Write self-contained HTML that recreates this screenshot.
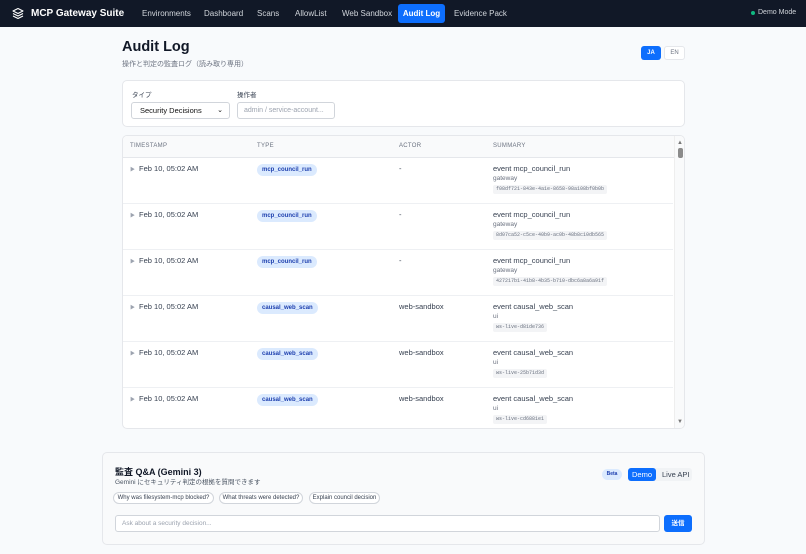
<!DOCTYPE html>
<html><head><meta charset="utf-8"><style>
*{box-sizing:border-box;margin:0;padding:0}
body{width:806px;height:554px;overflow:hidden;background:#f8fafc;font-family:"Liberation Sans","Noto Sans CJK JP",sans-serif;color:#1f2937;position:relative}
.a{position:absolute;white-space:nowrap}
.nav{position:absolute;left:0;top:0;width:806px;height:27px;background:#111827}
.ni{position:absolute;top:9px;font-size:8px;color:#d1d5db}
.card{position:absolute;background:#fff;border:1px solid #e5e7eb;border-radius:5px}
.th{position:absolute;top:143px;font-size:6px;color:#6b7280;letter-spacing:.3px}
.pill{position:absolute;height:12px;line-height:12px;padding:0 5px;border-radius:6px;background:#dbeafe;color:#1e40af;font-size:6px;font-weight:bold}
.ts{font-size:7.5px;color:#374151}
.hash{position:absolute;background:#f3f4f6;border-radius:2px;font-family:"Liberation Mono",monospace;font-size:5px;color:#6b7280;height:9px;line-height:9px;padding:0 3px}
.chip{position:absolute;white-space:nowrap;overflow:hidden;top:492px;height:12px;line-height:11px;border:1px solid #d1d5db;border-radius:6px;background:#fff;font-size:6px;text-align:center;color:#374151}
</style></head><body>
<div class="nav">
<svg class="a" style="left:12px;top:7px" width="12" height="13" viewBox="0 0 24 24" fill="none" stroke="#fff" stroke-width="2.2" stroke-linejoin="round"><path d="M12 2L2 7l10 5 10-5z"/><path d="M2 12l10 5 10-5"/><path d="M2 17l10 5 10-5"/></svg>
<div class="a" style="left:31px;top:8px;font-size:10px;font-weight:bold;color:#fff">MCP Gateway Suite</div>
<div class="ni" style="left:142px">Environments</div>
<div class="ni" style="left:204px">Dashboard</div>
<div class="ni" style="left:257px">Scans</div>
<div class="ni" style="left:295px">AllowList</div>
<div class="ni" style="left:342px">Web Sandbox</div>
<div class="a" style="left:398px;top:4px;width:47px;height:19px;background:#0d6efd;border-radius:3px;color:#fff;font-size:8px;font-weight:bold;text-align:center;line-height:19px">Audit Log</div>
<div class="ni" style="left:454px">Evidence Pack</div>
<div class="a" style="left:751px;top:11px;width:4px;height:4px;border-radius:2px;background:#10b981"></div>
<div class="a" style="left:758px;top:9px;font-size:7px;color:#d1d5db">Demo Mode</div>
</div>
<div class="a" style="left:122px;top:39px;font-size:14.5px;font-weight:bold;color:#111827">Audit Log</div>
<div class="a" style="left:122px;top:59px;font-size:7px;color:#6b7280">操作と判定の監査ログ（読み取り専用）</div>
<div class="a" style="left:641px;top:46px;width:20px;height:14px;background:#0d6efd;border-radius:3px;color:#fff;font-size:6px;font-weight:bold;text-align:center;line-height:14px">JA</div>
<div class="a" style="left:664px;top:46px;width:21px;height:14px;background:#fff;border:1px solid #e5e7eb;border-radius:3px;color:#6b7280;font-size:6px;text-align:center;line-height:12px">EN</div>

<div class="card" style="left:122px;top:80px;width:563px;height:47px"></div>
<div class="a" style="left:132px;top:89px;font-size:6.5px;color:#374151">タイプ</div>
<div class="a" style="left:237px;top:89px;font-size:6.5px;color:#374151">操作者</div>
<div class="a" style="left:131px;top:102px;width:99px;height:17px;border:1px solid #d1d5db;border-radius:3px;background:#fff;font-size:7.5px;line-height:15px;padding-left:8px;color:#111">Security Decisions<span style="position:absolute;right:6px;top:0;font-size:7px">⌄</span></div>
<div class="a" style="left:237px;top:102px;width:98px;height:17px;border:1px solid #d1d5db;border-radius:3px;background:#fff;font-size:7px;line-height:15px;padding-left:6px;color:#9ca3af">admin / service-account...</div>

<div class="card" style="left:122px;top:135px;width:563px;height:294px;overflow:hidden">
<div class="a" style="left:0;top:0;width:551px;height:22px;background:#f9fafb;border-bottom:1px solid #e5e7eb"></div>
<div class="a" style="left:551px;top:0;width:11px;height:294px;background:#f9fafb;border-left:1px solid #eee"></div>
<div class="a" style="left:554px;top:4px;font-size:6px;color:#777">▲</div>
<div class="a" style="left:555px;top:12px;width:5px;height:10px;border-radius:2px;background:#8b8b8b"></div>
<div class="a" style="left:554px;top:283px;font-size:6px;color:#777">▼</div>
</div>
<div class="th" style="left:130px">TIMESTAMP</div>
<div class="th" style="left:257px">TYPE</div>
<div class="th" style="left:399px">ACTOR</div>
<div class="th" style="left:493px">SUMMARY</div>

<div id="rows"></div>
<script>
var d=[["mcp_council_run","-","gateway","f08df721-843e-4a1e-8658-98a108bf0b0b"],["mcp_council_run","-","gateway","8d07ca52-c5ce-40b9-ac0b-48b8c10db565"],["mcp_council_run","-","gateway","427217b1-41b8-4b35-b710-dbc6a8a6a91f"],["causal_web_scan","web-sandbox","ui","ws-live-d81de736"],["causal_web_scan","web-sandbox","ui","ws-live-25b71d3d"],["causal_web_scan","web-sandbox","ui","ws-live-cd6881e1"]];
var h="";d.forEach(function(r,i){var y=157+i*46;
if(i>0)h+='<div class="a" style="left:123px;top:'+(y)+'px;width:550px;height:1px;background:#eef0f3"></div>';
h+='<div class="a ts" style="left:130px;top:'+(y+7)+'px"><span style="color:#9ca3af;font-size:5px;margin-right:4px">▶</span>Feb 10, 05:02 AM</div>';
h+='<div class="pill" style="left:257px;top:'+(y+7)+'px">'+r[0]+'</div>';
h+='<div class="a ts" style="left:399px;top:'+(y+7)+'px">'+r[1]+'</div>';
h+='<div class="a ts" style="left:493px;top:'+(y+7)+'px">event '+r[0]+'</div>';
h+='<div class="a" style="left:493px;top:'+(y+18)+'px;font-size:6.5px;color:#6b7280">'+r[2]+'</div>';
h+='<div class="hash" style="left:493px;top:'+(y+28)+'px">'+r[3]+'</div>';});
document.getElementById("rows").innerHTML=h;
</script>

<div class="a" style="left:102px;top:452px;width:603px;height:93px;background:#f9fafb;border:1px solid #e5e7eb;border-radius:5px"></div>
<div class="a" style="left:115px;top:465px;font-size:9px;font-weight:bold;color:#111827">監査 Q&amp;A (Gemini 3)</div>
<div class="a" style="left:115px;top:476px;font-size:6.5px;color:#4b5563">Gemini にセキュリティ判定の根拠を質問できます</div>
<div class="a" style="left:602px;top:469px;width:20px;height:11px;border-radius:6px;background:#dbeafe;color:#1e40af;font-size:5px;font-weight:bold;text-align:center;line-height:11px">Beta</div>
<div class="a" style="left:628px;top:468px;width:64px;height:13px;background:#f1f3f5;border-radius:3px"></div>
<div class="a" style="left:628px;top:468px;width:28px;height:13px;background:#0d6efd;border-radius:3px;color:#fff;font-size:7.5px;text-align:center;line-height:13px">Demo</div>
<div class="a" style="left:662px;top:470px;font-size:7.5px;color:#374151">Live API</div>
<div class="chip" style="left:113px;width:101px">Why was filesystem-mcp blocked?</div>
<div class="chip" style="left:219px;width:84px">What threats were detected?</div>
<div class="chip" style="left:309px;width:71px">Explain council decision</div>
<div class="a" style="left:115px;top:515px;width:545px;height:17px;background:#fff;border:1px solid #d1d5db;border-radius:3px;font-size:6.5px;color:#9ca3af;line-height:15px;padding-left:6px">Ask about a security decision...</div>
<div class="a" style="left:664px;top:515px;width:28px;height:17px;background:#0d6efd;border-radius:3px;color:#fff;font-size:6.5px;font-weight:bold;text-align:center;line-height:17px">送信</div>
</body></html>
